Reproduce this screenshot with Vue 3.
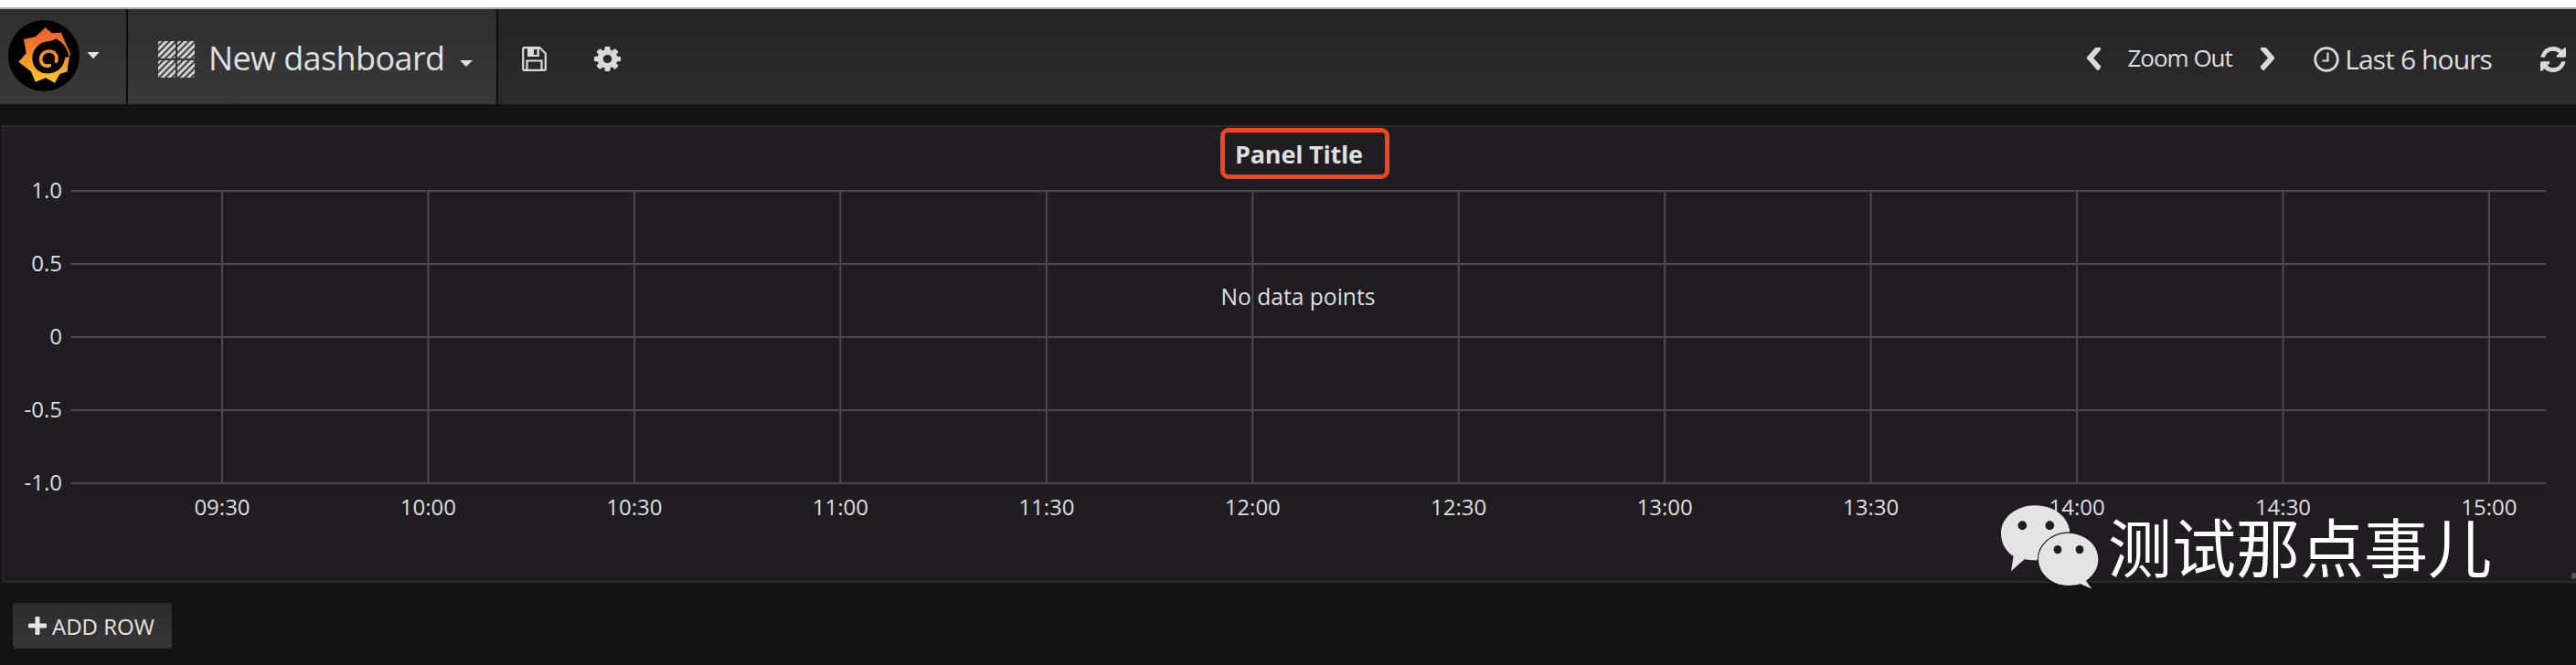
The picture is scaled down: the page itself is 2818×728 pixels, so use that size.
<script setup>
const xLabels = ['09:30','10:00','10:30','11:00','11:30','12:00','12:30','13:00','13:30','14:00','14:30','15:00']
const yLabels = ['1.0','0.5','0','-0.5','-1.0']
const xTicks = xLabels.map((label, i) => ({ label, x: 243 + i * 225.45 }))
const yTicks = yLabels.map((label, i) => ({ label, y: 22 + i * 80 }))
</script>

<template>
  <div class="page">
    <div class="topline"></div>
    <header class="nav">
      <div class="tile logo-tile">
        <svg class="logo" viewBox="0 0 330 240">
          <defs>
            <linearGradient id="flame" x1="0" y1="0" x2="0" y2="1">
              <stop offset="0" stop-color="#ee5a2b" />
              <stop offset="0.5" stop-color="#f68a2c" />
              <stop offset="1" stop-color="#fcca2e" />
            </linearGradient>
            <linearGradient id="flame2" gradientUnits="userSpaceOnUse" x1="0" y1="27" x2="0" y2="209">
              <stop offset="0" stop-color="#ee5a2b" />
              <stop offset="0.5" stop-color="#f68a2c" />
              <stop offset="1" stop-color="#fcca2e" />
            </linearGradient>
          </defs>
          <circle cx="120" cy="120" r="117" fill="#000" />
          <path fill="url(#flame)" d="M125 27 L146 46 L177 44 L187 68 L206 112 L199 151 L197 172 L172 180 L156 209 L126 193 L92 206 L78 172 L37 140 L62 112 L54 66 L92 58 Z" />
          <path fill="#000" d="M160 64 C184 74 198 96 203 124 L190 126 C186 160 160 180 128 178 C100 176 82 155 82 128 C82 98 108 72 136 72 C146 72 154 68 160 64 Z" />
          <path fill="none" stroke="url(#flame2)" stroke-width="11" stroke-linecap="round" d="M139 152 C120 158 108 144 110 128 C112 112 128 102 144 106 C158 110 166 124 160 138" />
          <path fill="none" stroke="#ee6a2b" stroke-width="5" d="M164 64 C184 74 198 92 205 118" />
          <path fill="#e4e4e4" d="M262 108 H302 L282 130 Z" />
        </svg>
      </div>
      <div class="tile dash-tile">
        <svg class="grid-icon" viewBox="0 0 40 40">
          <defs>
            <pattern id="hatch" width="5" height="5" patternUnits="userSpaceOnUse" patternTransform="rotate(45)">
              <rect width="3.2" height="5" fill="#cfcfcf" />
              <rect x="3.2" width="1.8" height="5" fill="#3a3a3a" />
            </pattern>
          </defs>
          <rect x="0" y="0" width="19" height="19" rx="2" fill="url(#hatch)" />
          <rect x="21" y="0" width="19" height="19" rx="2" fill="url(#hatch)" />
          <rect x="0" y="21" width="19" height="19" rx="2" fill="url(#hatch)" />
          <rect x="21" y="21" width="19" height="19" rx="2" fill="url(#hatch)" />
        </svg>
        <span class="dash-name">New dashboard</span>
        <span class="caret"></span>
      </div>
      <div class="tools">
        <svg class="save" viewBox="0 0 27 27">
          <path fill="none" stroke="#d8d9da" stroke-width="2.2" stroke-linejoin="round" d="M1.200 2.600 Q1.200 1.200 2.600 1.200 H19.500 L25.800 7.500 V24.400 Q25.800 25.800 24.400 25.800 H2.600 Q1.200 25.800 1.200 24.400 Z" />
          <path fill="#d8d9da" d="M6 1.500 H19 V11 H6 Z" />
          <rect x="13" y="3" width="3.500" height="6" fill="#2a2a2a" />
          <path fill="none" stroke="#d8d9da" stroke-width="2.200" d="M5.500 25 V15.500 H21.500 V25" />
        </svg>
        <svg class="cog" viewBox="128 128 1536 1536" preserveAspectRatio="none">
          <path fill="#d8d9da" d="M1152 896q0-106-75-181t-181-75-181 75-75 181 75 181 181 75 181-75 75-181zm512-109v222q0 12-8 23t-20 13l-185 28q-19 54-39 91 35 50 107 138 10 12 10 25t-9 23q-27 37-99 108t-94 71q-12 0-26-9l-138-108q-44 23-91 38-16 136-29 186-7 28-36 28h-222q-14 0-24.500-8.500t-11.500-21.500l-28-184q-49-16-90-37l-141 107q-10 9-25 9-14 0-25-11-126-114-165-168-7-10-7-23 0-12 8-23 15-21 51-66.500t54-70.500q-27-50-41-99l-183-27q-13-2-21-12.500t-8-23.500v-222q0-12 8-23t19-13l186-28q14-46 39-92-40-57-107-138-10-12-10-24 0-10 9-23 26-36 98.500-107.500t94.500-71.500q13 0 26 10l138 107q44-23 91-38 16-136 29-186 7-28 36-28h222q14 0 24.500 8.500t11.500 21.500l28 184q49 16 90 37l142-107q9-9 24-9 13 0 25 10 129 119 165 170 7 8 7 22 0 12-8 23-15 21-51 66.500t-54 70.500q26 50 41 98l183 28q13 2 21 12.500t8 23.500z" />
        </svg>
      </div>
      <div class="time">
        <svg class="chev" viewBox="365 173 1082 1446" preserveAspectRatio="none">
          <path fill="#d8d9da" d="M1427 301l-531 531 531 531q19 19 19 45t-19 45l-166 166q-19 19-45 19t-45-19l-742-742q-19-19-19-45t19-45l742-742q19-19 45-19t45 19l166 166q19 19 19 45t-19 45z" />
        </svg>
        <span class="zoom">Zoom Out</span>
        <svg class="chev chev-r" viewBox="301 173 1081 1446" preserveAspectRatio="none">
          <path fill="#d8d9da" d="M1363 877l-742 742q-19 19-45 19t-45-19l-166-166q-19-19-19-45t19-45l531-531-531-531q-19-19-19-45t19-45l166-166q19-19 45-19t45 19l742 742q19 19 19 45t-19 45z" />
        </svg>
        <svg class="clock" viewBox="0 0 28 28">
          <circle cx="14" cy="14" r="12.300" fill="none" stroke="#d8d9da" stroke-width="2.800" />
          <path fill="none" stroke="#d8d9da" stroke-width="2.200" d="M15.500 6.500 V15.500 H9.500" />
        </svg>
        <span class="range">Last 6 hours</span>
        <svg class="refresh" viewBox="128 128 1536 1536">
          <path fill="#d8d9da" d="M1639 1056q0 5-1 7-64 268-268 434.500t-478 166.500q-146 0-282.500-55t-243.500-157l-129 129q-19 19-45 19t-45-19-19-45v-448q0-26 19-45t45-19h448q26 0 45 19t19 45-19 45l-137 137q71 66 161 102t187 36q134 0 250-65t186-179q11-17 53-117 8-23 30-23h192q13 0 22.500 9.500t9.500 22.500zm25-800v448q0 26-19 45t-45 19h-448q-26 0-45-19t-19-45 19-45l138-138q-148-137-349-137-134 0-250 65t-186 179q-11 17-53 117-8 23-30 23h-199q-13 0-22.500-9.500t-9.500-22.500v-7q65-268 270-434.500t480-166.500q146 0 284 55.500t245 156.500l130-129q19-19 45-19t45 19 19 45z" />
        </svg>
      </div>
    </header>

    <section class="panel">
      <div class="panel-head">
        <h2 class="panel-title">Panel Title</h2>
      </div>
      <svg class="chart" viewBox="0 0 2816 449" width="2816" height="449">
        <g stroke="#4a4a4a" stroke-width="2">
          <line v-for="t in yTicks" :key="t.label" x1="78" x2="2785" :y1="t.y" :y2="t.y" />
          <line v-for="t in xTicks" :key="t.label" :x1="t.x" :x2="t.x" y1="22" y2="342" />
        </g>
        <g class="ax">
          <text v-for="t in yTicks" :key="t.label" x="68" :y="t.y + 8" text-anchor="end">{{ t.label }}</text>
          <text v-for="t in xTicks" :key="t.label" :x="t.x" y="377" text-anchor="middle">{{ t.label }}</text>
          <text class="no-data" x="1420" y="147" text-anchor="middle">No data points</text>
        </g>
      </svg>
      <span class="resize-dot"></span>
    </section>

    <footer class="foot">
      <button class="add-row">
        <svg class="plus" viewBox="0 0 20 20">
          <path fill="#e4e4e4" d="M7.500 1 Q7.500 0 8.500 0 H11.500 Q12.500 0 12.500 1 V7.500 H19 Q20 7.500 20 8.500 V11.500 Q20 12.500 19 12.500 H12.500 V19 Q12.500 20 11.500 20 H8.500 Q7.500 20 7.500 19 V12.500 H1 Q0 12.500 0 11.500 V8.500 Q0 7.500 1 7.500 H7.500 Z" />
        </svg>
        <span>ADD ROW</span>
      </button>
    </footer>

    <div class="watermark">
      <svg class="wechat" viewBox="0 0 390 315">
        <path fill="#e4e4e4" d="M140 25 C205 25 253 68 253 118 C253 170 200 205 140 205 C128 205 116 204 105 201 L60 241 L68 192 C45 178 27 150 27 116 C27 66 75 25 140 25 Z" />
        <ellipse cx="97" cy="91" rx="14.500" ry="15" fill="#1f1d1f" />
        <ellipse cx="187" cy="91" rx="14.500" ry="15" fill="#1f1d1f" />
        <path fill="#e4e4e4" stroke="#141414" stroke-width="7" paint-order="stroke" d="M248 116 C302 116 346 155 346 202 C346 232 330 256 306 272 L325 299 L288 283 C276 286 262 288 248 288 C194 288 150 250 150 202 C150 155 194 116 248 116 Z" />
        <ellipse cx="213" cy="170" rx="13" ry="14" fill="#1f1d1f" />
        <ellipse cx="285" cy="170" rx="13" ry="14" fill="#1f1d1f" />
      </svg>
      <span class="wm-text">测试那点事儿</span>
    </div>
  </div>
</template>

<style scoped>
.page {
  position: relative;
  width: 2818px;
  height: 728px;
  overflow: hidden;
  background: #141414;
  font-family: "Open Sans", "Noto Sans", sans-serif;
  color: #dedfe0;
}
.topline {
  height: 8px;
  background: #fff;
  border-bottom: 2px solid #adadad;
}
.nav {
  display: flex;
  align-items: stretch;
  height: 104px;
  background: linear-gradient(#242424, #2c2c2c);
}
.tile {
  display: flex;
  align-items: center;
  background: linear-gradient(#2f2f2f, #383838);
  border-right: 2px solid #0c0c0c;
}
.logo-tile {
  width: 130px;
  padding-left: 8px;
}
.logo {
  width: 110px;
  height: 80px;
  flex: none;
  margin-top: -2px;
}
.dash-tile {
  width: 405px;
  padding-left: 33px;
  box-sizing: border-box;
}
.grid-icon {
  width: 40px;
  height: 40px;
  flex: none;
  margin-top: 6px;
}
.dash-name {
  margin-left: 15px;
  font-size: 36px;
  letter-spacing: -0.6px;
  line-height: 1;
  margin-top: 4px;
  white-space: nowrap;
}
.caret {
  margin-left: 17px;
  width: 0;
  height: 0;
  margin-top: 14px;
  border-left: 7px solid transparent;
  border-right: 7px solid transparent;
  border-top: 7px solid #dedfe0;
}
.tools {
  display: flex;
  align-items: center;
  gap: 52px;
  padding-left: 26px;
  margin-top: 5px;
}
.save { width: 27px; height: 27px; }
.cog { width: 29px; height: 27px; }
.time {
  display: flex;
  align-items: center;
  margin-left: auto;
  margin-top: 5px;
  padding-right: 11px;
}
.chev { width: 16.500px; height: 25px; }
.chev-r { margin-left: 30px; }
.zoom {
  margin-left: 29px;
  font-size: 26px;
  letter-spacing: -1px;
  margin-top: -3px;
  white-space: nowrap;
}
.clock { width: 28px; height: 28px; margin-left: 43px; }
.range {
  margin-left: 6px;
  font-size: 30px;
  letter-spacing: -0.9px;
  white-space: nowrap;
}
.refresh { width: 28px; height: 28px; margin-left: 53px; }
.panel {
  margin: 23px 0 0 2px;
  position: relative;
  height: 501px;
  box-sizing: border-box;
  background: #1f1d1f;
  border-top: 2px solid #2a2a2a;
  border-left: 2px solid #2a2a2a;
  border-bottom: 2px solid #2a2a2a;
}
.panel-head {
  display: flex;
  justify-content: center;
  height: 48px;
  padding-left: 33px;
}
.panel-title {
  margin: 1px 0 0;
  padding-left: 11px;
  width: 185px;
  height: 56px;
  box-sizing: border-box;
  border: 5px solid #f3441c;
  border-radius: 9px;
  font-size: 27px;
  font-weight: 700;
  letter-spacing: -0.2px;
  line-height: 48px;
  white-space: nowrap;
}
.chart {
  display: block;
  margin-left: -4px;
}
.ax text {
  font-family: "Open Sans", sans-serif;
  font-size: 24px;
  fill: #dedfe0;
}
.ax .no-data { font-size: 24.600px; }
.resize-dot {
  position: absolute;
  right: 0;
  bottom: 2px;
  width: 5px;
  height: 7px;
  border-radius: 3px;
  background: #555;
}
.foot {
  padding: 22px 0 0 14px;
}
.add-row {
  display: flex;
  align-items: center;
  gap: 6px;
  width: 174px;
  height: 50px;
  padding: 0 0 0 17px;
  box-sizing: border-box;
  border: none;
  border-radius: 4px;
  background: linear-gradient(#2c2c2c, #363636);
  color: #e4e4e4;
  font-family: "Open Sans", sans-serif;
  font-size: 24px;
  white-space: nowrap;
}
.plus { width: 20px; height: 20px; flex: none; }
.watermark {
  position: absolute;
  left: 2180px;
  top: 545px;
  display: flex;
  align-items: flex-start;
}
.wechat { width: 130px; height: 105px; flex: none; }
.wm-text {
  margin-left: -4px;
  margin-top: 12px;
  font-family: "Noto Sans CJK SC", sans-serif;
  font-size: 70px;
  line-height: 80px;
  font-weight: 400;
  color: #fff;
  white-space: nowrap;
}
</style>
